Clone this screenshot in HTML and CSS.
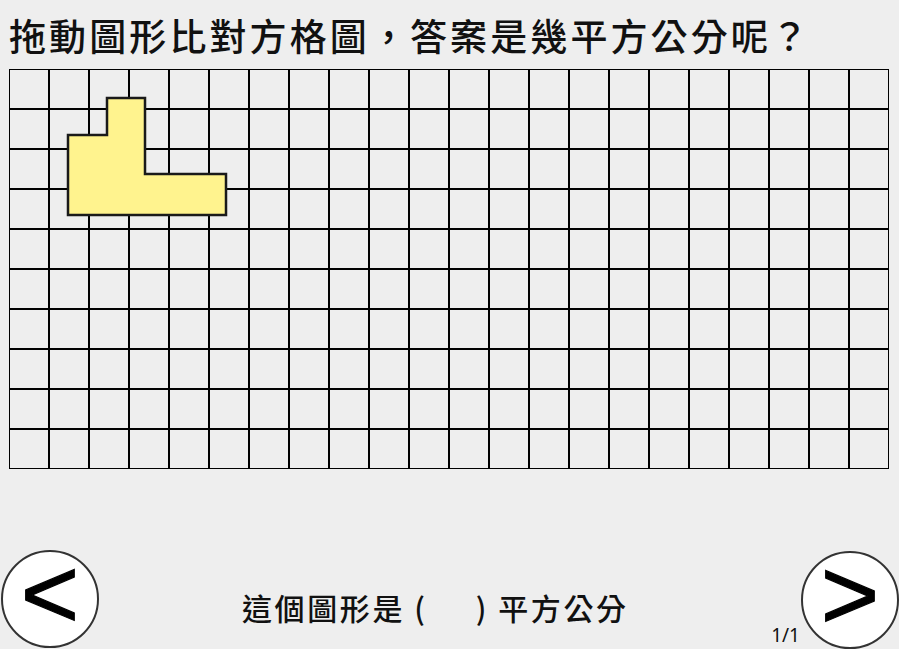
FILE: index.html
```html
<!DOCTYPE html>
<html lang="zh-Hant">
<head>
<meta charset="utf-8">
<title>方格圖</title>
<link rel="stylesheet" href="styles.css">
</head>
<body>
<div class="page">
  <h1 class="title">拖動圖形比對方格圖，答案是幾平方公分呢？</h1>
  <div class="board">
    <svg class="shape" width="240" height="180" viewBox="0 0 240 180">
      <polygon points="59,66 98,66 98,29 136,29 136,105 217,105 217,146 59,146" fill="#fff38e" stroke="#1a1a1a" stroke-width="2.5" stroke-linejoin="miter"/>
    </svg>
  </div>
  <div class="spacer"></div>
  <div class="footer">
    <button class="nav prev">&lt;</button>
    <div class="question">這個圖形是 (<span class="blank"></span>) 平方公分</div>
    <div class="pager">1/1</div>
    <button class="nav next">&gt;</button>
  </div>
</div>
</body>
</html>
```

FILE: styles.css
```css
html, body {
  margin: 0;
  padding: 0;
  background: #eeeeee;
}
.page {
  width: 899px;
  height: 649px;
  display: flex;
  flex-direction: column;
  overflow: hidden;
  font-family: "Noto Sans CJK TC", "Noto Sans", sans-serif;
  color: #111;
}
.title {
  margin: 0;
  padding: 15px 0 0 9px;
  height: 55px;
  box-sizing: border-box;
  font-size: 37px;
  font-weight: 500;
  letter-spacing: 3.1px;
  line-height: 40px;
  white-space: nowrap;
}
.board {
  position: relative;
  margin-left: 9px;
  margin-top: 14px;
  width: 880px;
  height: 400px;
  box-sizing: border-box;
  border: 1px solid #000;
  background-color: #eeeeee;
  background-image:
    linear-gradient(to right, transparent 38px, #000 38px, #000 40px, transparent 40px),
    linear-gradient(to bottom, transparent 38px, #000 38px, #000 40px, transparent 40px);
  background-size: 40px 40px;
  background-repeat: repeat;
}
.shape {
  position: absolute;
  left: -1px;
  top: -1px;
}
.spacer {
  flex: 1;
}
.footer {
  height: 100px;
  display: flex;
  align-items: center;
  position: relative;
}
.nav {
  width: 98px;
  height: 98px;
  border-radius: 50%;
  border: 2px solid #333;
  background: #fff;
  padding: 0 0 12px 0;
  font-family: "Liberation Sans", Arial, sans-serif;
  font-size: 100px;
  font-weight: normal;
  line-height: 80px;
  text-align: center;
  color: #000;
  -webkit-text-stroke: 1.2px #000;
  box-sizing: border-box;
}
.prev {
  margin-left: 1px;
}
.next {
  margin-left: 1px;
  margin-top: 2px;
}
.question {
  flex: 1;
  padding-left: 143px;
  font-size: 30px;
  font-weight: 500;
  letter-spacing: 2.6px;
  white-space: nowrap;
  margin-top: 16px;
}
.blank {
  display: inline-block;
  width: 48px;
}
.pager {
  align-self: flex-end;
  font-family: "Noto Sans", sans-serif;
  font-size: 19px;
  line-height: 22px;
  margin-bottom: 3px;
}
```
